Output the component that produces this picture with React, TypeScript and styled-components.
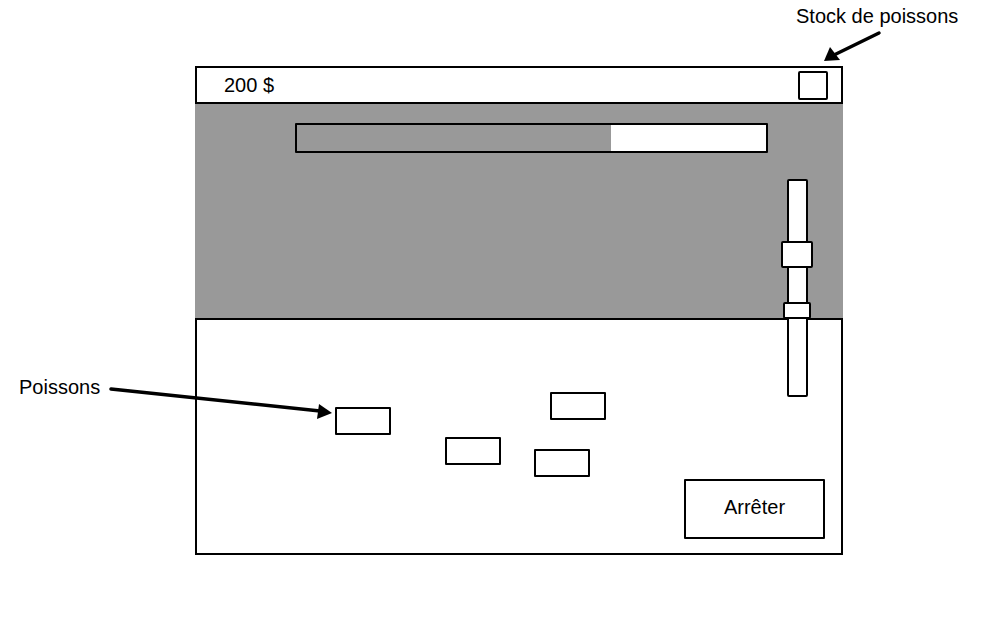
import styled, { createGlobalStyle } from "styled-components";

const GlobalStyle = createGlobalStyle`
  html, body {
    margin: 0;
    padding: 0;
    background: #fff;
  }
  body {
    font-family: "Liberation Sans", Arial, sans-serif;
    color: #000;
  }
  * { box-sizing: border-box; }
`;

const Stage = styled.div`
  position: relative;
  width: 996px;
  height: 637px;
  padding: 66px 0 0 195px;
  overflow: hidden;
`;

const Window = styled.div`
  position: relative;
  width: 648px;
  display: flex;
  flex-direction: column;
`;

const TopBar = styled.div`
  height: 38px;
  border: 2px solid #000;
  display: flex;
  align-items: center;
  justify-content: space-between;
  padding: 0 13px 0 27px;
  font-size: 20px;
`;

const StockBox = styled.div`
  width: 30px;
  height: 29px;
  border: 2px solid #000;
  border-radius: 2px;
  margin-top: 1px;
`;

const Water = styled.div`
  height: 214px;
  background: #999999;
  padding: 19px 0 0 100px;
`;

const Gauge = styled.div`
  width: 473px;
  height: 30px;
  border: 2px solid #000;
  border-radius: 1px;
  background: #fff;
  overflow: hidden;
`;

const GaugeFill = styled.div`
  height: 100%;
  background: #999999;
`;

const Ground = styled.div`
  position: relative;
  height: 237px;
  border: 2px solid #000;
  display: flex;
  justify-content: flex-end;
  align-items: flex-end;
  padding: 0 16px 14px 0;
`;

const Fish = styled.div<{ $x: number; $y: number }>`
  position: absolute;
  left: ${(p) => p.$x}px;
  top: ${(p) => p.$y}px;
  width: 56px;
  height: 28px;
  border: 2.5px solid #000;
  border-radius: 1px;
  background: #fff;
`;

const StopButton = styled.button`
  width: 141px;
  height: 60px;
  border: 2px solid #000;
  border-radius: 1px;
  background: #fff;
  font-family: "Liberation Sans", Arial, sans-serif;
  font-size: 20px;
  color: #000;
  padding: 0 0 4px 0;
  cursor: pointer;
`;

const Track = styled.div`
  position: absolute;
  left: 592px;
  top: 113px;
  width: 21px;
  height: 218px;
  border: 2.5px solid #000;
  border-radius: 2px;
  background: #fff;
`;

const Thumb = styled.div<{ $x: number; $y: number; $w: number; $h: number }>`
  position: absolute;
  left: ${(p) => p.$x}px;
  top: ${(p) => p.$y}px;
  width: ${(p) => p.$w}px;
  height: ${(p) => p.$h}px;
  border: 2.5px solid #000;
  border-radius: 2px;
  background: #fff;
`;

const Note = styled.div<{ $x: number; $y: number }>`
  position: absolute;
  left: ${(p) => p.$x}px;
  top: ${(p) => p.$y}px;
  font-size: 20px;
  white-space: nowrap;
`;

const Arrows = styled.svg`
  position: absolute;
  left: 0;
  top: 0;
  pointer-events: none;
`;

const fishes = [
  { x: 140, y: 89 },
  { x: 355, y: 74 },
  { x: 250, y: 119 },
  { x: 339, y: 131 },
];

export default function App() {
  return (
    <>
      <GlobalStyle />
      <Stage>
        <Window>
          <TopBar>
            <span>200 $</span>
            <StockBox />
          </TopBar>
          <Water>
            <Gauge>
              <GaugeFill style={{ width: "67%" }} />
            </Gauge>
          </Water>
          <Ground>
            {fishes.map((f, i) => (
              <Fish key={i} $x={f.x - 2} $y={f.y - 2} />
            ))}
            <StopButton>Arrêter</StopButton>
          </Ground>
          <Track />
          <Thumb $x={586} $y={175} $w={32} $h={27} />
          <Thumb $x={588} $y={236} $w={28} $h={17} />
        </Window>

        <Note $x={796} $y={5}>Stock de poissons</Note>
        <Note $x={19} $y={376}>Poissons</Note>

        <Arrows width="996" height="637" viewBox="0 0 996 637">
          <g stroke="#000" strokeWidth="3.5" strokeLinecap="round" fill="#000">
            <line x1="879" y1="33" x2="834" y2="55" />
            <polygon points="824,61 830,47 840,60" stroke="none" />
            <line x1="111" y1="389" x2="320" y2="411" />
            <polygon points="332,413 319,404 317,419" stroke="none" />
          </g>
        </Arrows>
      </Stage>
    </>
  );
}
